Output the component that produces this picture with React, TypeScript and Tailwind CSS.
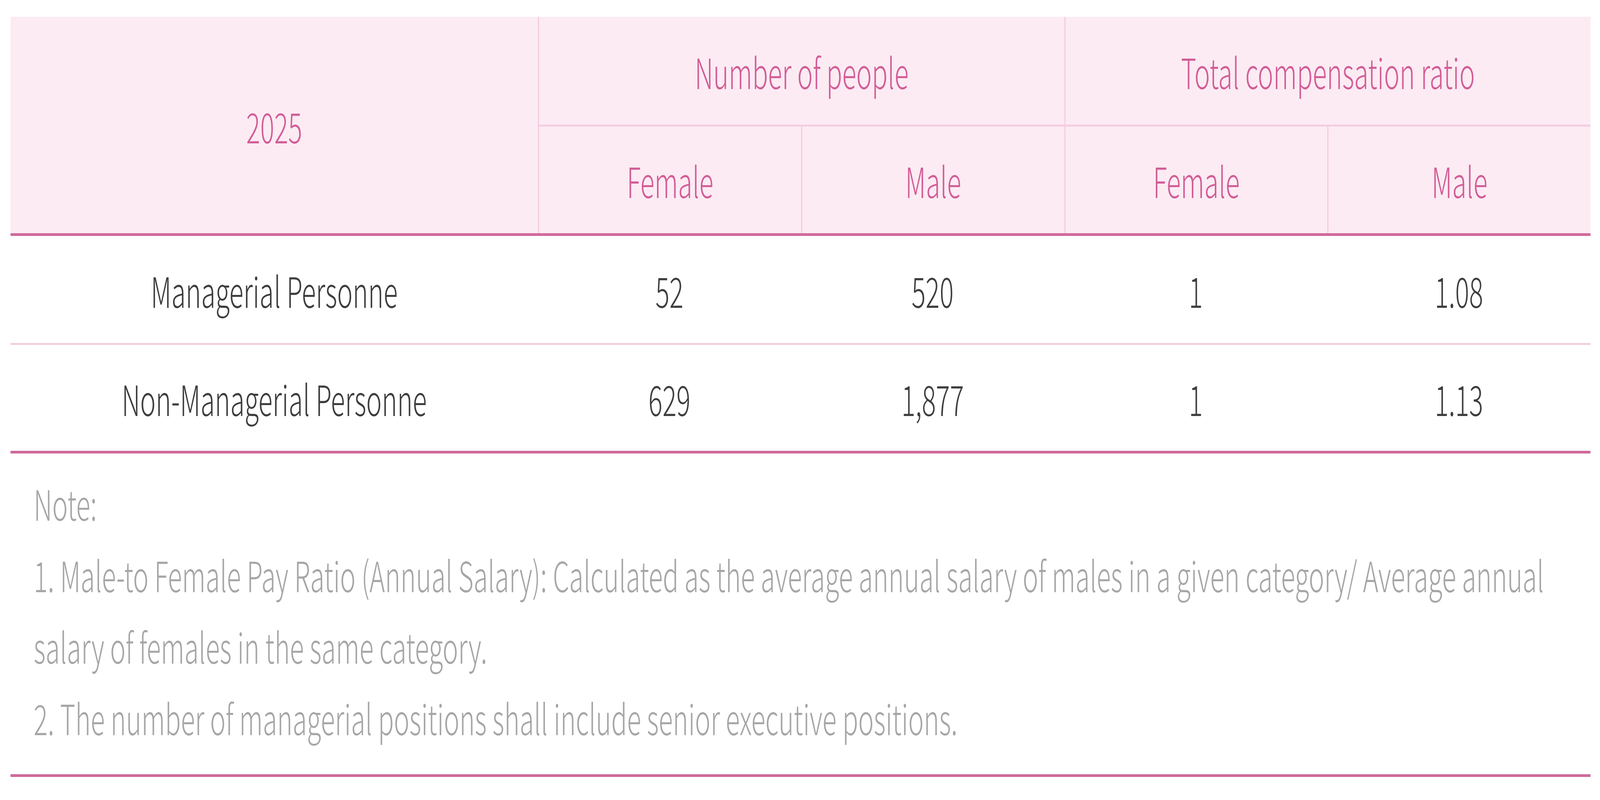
import { useState } from 'react';

const FONT = "font-['Noto_Sans_CJK_TC','Noto_Sans',sans-serif]";
const COLS = 'grid-cols-[2158px_repeat(4,minmax(0,1fr))]';
const DESIGN_WIDTH = 6547;

type Row = { label: string; values: string[] };

const rows: Row[] = [
  { label: 'Managerial Personne', values: ['52', '520', '1', '1.08'] },
  { label: 'Non-Managerial Personne', values: ['629', '1,877', '1', '1.13'] },
];

const notes = [
  'Note:',
  '1. Male-to Female Pay Ratio (Annual Salary): Calculated as the average annual salary of males in a given category/ Average annual salary of females in the same category.',
  '2. The number of managerial positions shall include senior executive positions.',
];

function HeadCell({ children, className = '' }: { children: React.ReactNode; className?: string }) {
  return (
    <div className={`flex items-center justify-center whitespace-nowrap text-[#d25d97] ${className}`}>
      {children}
    </div>
  );
}

function BodyRow({ row, last }: { row: Row; last: boolean }) {
  return (
    <div
      className={`grid ${COLS} ${
        last ? 'h-[278px] border-b-[7px] border-[#d0699c]' : 'h-[279px] border-b-[5px] border-[#f5cde0]'
      }`}
    >
      <div className="flex items-center justify-center whitespace-nowrap">{row.label}</div>
      {row.values.map((v, i) => (
        <div key={i} className="flex items-center justify-center">
          {v}
        </div>
      ))}
    </div>
  );
}

export default function App() {
  // the table is laid out at the design width and squeezed to fit narrower windows
  const [scale] = useState(() => Math.min(1, window.innerWidth / DESIGN_WIDTH));

  return (
    <div className="min-h-screen w-full overflow-hidden bg-white">
      <div
        className={`w-[6547px] origin-top-left pl-[43px] pr-[39px] pt-[43px] ${FONT} font-light text-[107px] leading-none`}
        style={{ transform: `scaleX(${scale})` }}
      >
        {/* header */}
        <div className={`grid h-[561px] ${COLS} grid-rows-[281px_273px] border-b-[7px] border-[#d0699c] bg-[#fcebf3]`}>
          <HeadCell className="row-span-2">2025</HeadCell>
          <HeadCell className="col-span-2 border-b-[5px] border-l-[5px] border-[#f5cde0]">Number of people</HeadCell>
          <HeadCell className="col-span-2 border-b-[5px] border-l-[5px] border-[#f5cde0]">Total compensation ratio</HeadCell>
          <HeadCell className="border-l-[5px] border-[#f5cde0]">Female</HeadCell>
          <HeadCell className="border-l-[5px] border-[#f5cde0]">Male</HeadCell>
          <HeadCell className="border-l-[5px] border-[#f5cde0]">Female</HeadCell>
          <HeadCell className="border-l-[5px] border-[#f5cde0]">Male</HeadCell>
        </div>

        {/* body */}
        <div className="text-[#3d3d3d]">
          {rows.map((r, i) => (
            <BodyRow key={r.label} row={r} last={i === rows.length - 1} />
          ))}
        </div>

        {/* notes */}
        <div className="border-b-[7px] border-[#d0699c] pb-[55px] pl-[95px] pr-[95px] pt-[34px] leading-[183px] text-[#a6a6a6]">
          {notes.map((n) => (
            <p key={n}>{n}</p>
          ))}
        </div>
      </div>
    </div>
  );
}
